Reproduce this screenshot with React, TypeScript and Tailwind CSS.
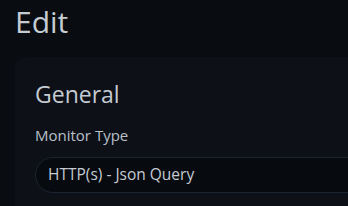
export default function App() {
  return (
    <div
      className="w-[348px] h-[206px] overflow-hidden bg-[#090c10] text-[#c5cbd3]"
      style={{ fontFamily: '"Open Sans", "Noto Sans", sans-serif' }}
    >
      <h1 className="pl-[15px] pt-[4px] text-[30px] leading-[36px] font-normal">Edit</h1>
      <div className="ml-[15px] mt-[17px] w-[400px] h-[200px] rounded-tl-[10px] bg-[#0d1017] pl-[20px] pt-[24px]">
        <h2 className="text-[23px] leading-[26px] font-normal text-[#c5cbd3]">General</h2>
        <div className="mt-[18px] text-[15px] leading-[20px] text-[#b9c0c9]">Monitor Type</div>
        <div className="mt-[12px] h-[36px] w-[360px] rounded-full border border-[#1c2431] bg-[#070a0f] pl-[12px] flex items-center text-[15.5px] text-[#c5cbd3]">
          HTTP(s) - Json Query
        </div>
      </div>
    </div>
  );
}
